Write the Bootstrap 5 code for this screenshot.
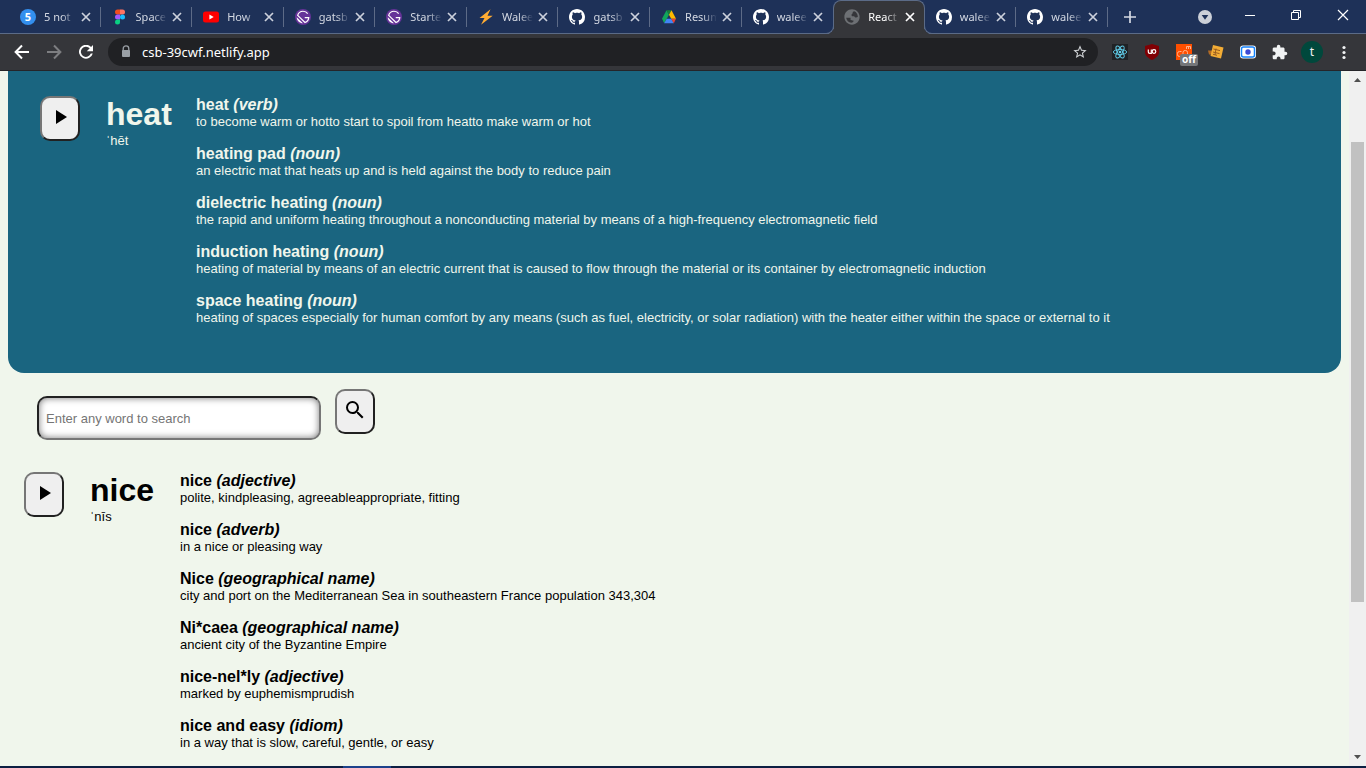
<!DOCTYPE html>
<html lang="en">
<head>
<meta charset="utf-8">
<meta name="viewport" content="width=device-width, initial-scale=1">
<title>React App</title>
<link href="https://cdn.jsdelivr.net/npm/bootstrap@5.3.0/dist/css/bootstrap.min.css" rel="stylesheet">
<style>
  :root { --strip: #1e3158; --edge: #5b6b87; --bar: #35363a; --field: #202124; --page: #f0f6ec; --panel: #1a6580; }
  body { font-family: "Liberation Sans", Arial, sans-serif; font-size: 13px; line-height: 15px; color: #000; background: var(--page); }
  button { color: inherit; }
  svg { display: block; flex: none; }

  .browser-ui { font-family: "Noto Sans", "Open Sans", sans-serif; }
  .tab-strip { background: var(--strip); height: 34px; padding-left: 9px; border-bottom: 1px solid var(--edge); }
  .tab-strip .tabs { flex: 1 1 0; min-width: 0; }
  .tab-item { flex: 1 1 0; min-width: 0; height: 34px; padding: 0 9px 0 11px; position: relative; }
  .tab-item::after { content: ""; position: absolute; right: 0; top: 7px; width: 1px; height: 20px; background: #5d6b87; }
  .tab-item a { color: #d3d8e2; font-size: 11px; line-height: 16px; gap: 8px; }
  .tab-title { overflow: hidden; white-space: nowrap; flex: 1 1 0; min-width: 0; -webkit-mask-image: linear-gradient(90deg, #000 55%, transparent); mask-image: linear-gradient(90deg, #000 55%, transparent); }
  .tab-close { width: 12px; height: 12px; margin-left: 4px; color: #ccd1dc; }
  .tab-item.before-current::after, .tab-item.current::after { display: none; }
  .tab-item.current .tab-face { background: var(--bar); border: 1px solid var(--edge); border-bottom: 0; border-radius: 8px 8px 0 0; position: absolute; inset: 0; }
  .tab-face::before, .tab-face::after { content: ""; position: absolute; bottom: 0; width: 8px; height: 8px; border: 1px solid var(--edge); border-top: 0; }
  .tab-face::before { left: -8px; border-left: 0; border-radius: 0 0 8px 0; box-shadow: 3px 3px 0 var(--bar); clip-path: inset(0 -1px 0 0); }
  .tab-face::after { right: -8px; border-right: 0; border-radius: 0 0 0 8px; box-shadow: -3px 3px 0 var(--bar); clip-path: inset(0 0 0 -1px); }
  .current a, .current .tab-close { color: #fff; position: relative; }
  .window-tools { width: 258px; color: #fff; }
  .window-tools button { height: 33px; }
  .plain { border: 0; background: none; padding: 0; display: flex; align-items: center; justify-content: center; flex: none; }

  .tool-bar { background: var(--bar); height: 37px; padding: 0 6px; border-bottom: 1px solid #252529; color: #f1f3f4; }
  .tool { width: 32px; height: 32px; position: relative; }
  .omnibox { background: var(--field); height: 28px; margin: 0 6px; border-radius: 14px; padding: 0 10px 0 12px; gap: 10px; }
  .omnibox input { background: none; border: 0; outline: 0; padding: 0; color: #fff; font-size: 13px; line-height: 20px; }
  .off-mark { position: absolute; left: 12px; top: 18px; width: 18px; height: 12px; border-radius: 2px; background: #747679; color: #fff; font-weight: 700; font-size: 10px; line-height: 11px; }
  .avatar { width: 22px; height: 22px; background: #00483c; font-size: 12px; line-height: 21px; }

  .viewport-row { min-height: 0; }
  .page-body { min-width: 0; overflow: hidden; padding: 0 8px; }
  .hero-panel { background: var(--panel); color: var(--page); border-radius: 0 0 16px 16px; padding: 25px 32px 32px; }
  .result { padding: 32px 16px 0; }
  .entry { gap: 26px; }
  .word-col { width: 64px; flex: none; }
  .key-btn { width: 40px; height: 45px; border: 2px solid; border-color: #767676 #212121 #212121 #767676; border-radius: 10px; background: #efefef; color: #000; padding: 0 0 3px; display: flex; align-items: center; justify-content: center; flex: none; }
  .headword { font-size: 32px; line-height: 37px; font-weight: 700; margin: 0; }
  .sense { margin: 0 0 16px; }
  .sense h2 { font-size: 16px; line-height: 18px; font-weight: 700; margin: 0; }
  .sense p { margin: 0; }
  .search-form { padding: 16px 29px 0; gap: 14px; }
  .search-form input { width: 284px; height: 44px; margin-top: 7px; border: 2px solid; border-color: #212121 #767676 #767676 #212121; border-radius: 10px; padding: 0 7px; background: #fff; box-shadow: inset 0 0 7px #777; font-size: 13px; outline: 0; }
  .search-form input::placeholder { color: #757575; opacity: 1; }

  .scroll-rail { width: 17px; background: #f0f0f0; flex: none; }
  .scroll-rail .thumb { flex: 460 1 0; background: #c1c1c1; margin: 0 2px; }
  .above { flex: 54 1 0; } .below { flex: 147 1 0; }
  .task-edge { height: 2px; background: #0c1f42; flex: none; }
  .task-edge span { width: 48px; margin-left: 343px; background: #1c428a; }
</style>
</head>
<body class="vh-100 d-flex flex-column overflow-hidden">

<svg class="d-none" aria-hidden="true">
  <symbol id="close" viewBox="0 0 12 12"><path d="M2 2l8 8M10 2l-8 8" stroke="currentColor" stroke-width="1.7"/></symbol>
  <symbol id="github" viewBox="0 0 16 16"><path fill="#fff" d="M8 0C3.58 0 0 3.58 0 8c0 3.54 2.29 6.53 5.47 7.59.4.07.55-.17.55-.38 0-.19-.01-.82-.01-1.49-2.01.37-2.53-.49-2.69-.94-.09-.23-.48-.94-.82-1.13-.28-.15-.68-.52-.01-.53.63-.01 1.08.58 1.23.82.72 1.21 1.87.87 2.33.66.07-.52.28-.87.51-1.07-1.78-.2-3.64-.89-3.64-3.95 0-.87.31-1.59.82-2.15-.08-.2-.36-1.02.08-2.12 0 0 .67-.21 2.2.82.64-.18 1.32-.27 2-.27s1.36.09 2 .27c1.53-1.04 2.2-.82 2.2-.82.44 1.1.16 1.92.08 2.12.51.56.82 1.27.82 2.15 0 3.07-1.87 3.75-3.65 3.95.29.25.54.73.54 1.48 0 1.07-.01 1.93-.01 2.2 0 .21.15.46.55.38A8.01 8.01 0 0 0 16 8c0-4.42-3.58-8-8-8z"/></symbol>
  <symbol id="gatsby" viewBox="0 0 24 24"><circle cx="12" cy="12" r="12" fill="#663399"/><path d="M19 6.900C17.500 4.700 15 3.400 12 3.400 8 3.400 5 6 4 9.600l11 10.700c3.200-1.300 5.400-4 5.600-7.400h-6" fill="none" stroke="#fff" stroke-width="1.800"/><path d="M2.600 12.200l9.300 9.200c-2.400-.1-4.800-.9-6.600-2.700s-2.700-4.200-2.700-6.500z" fill="#fff"/></symbol>
  <symbol id="play" viewBox="0 0 24 24"><path fill="currentColor" d="M8 5v14l11-7z"/></symbol>
</svg>

<header class="browser-ui flex-shrink-0">
  <div class="tab-strip d-flex">
    <nav class="tabs d-flex" aria-label="Open tabs">
      <div class="tab-item d-flex align-items-center"><a class="d-flex align-items-center flex-fill text-decoration-none overflow-hidden" href="#"><svg width="16" height="16" viewBox="0 0 16 16"><circle cx="8" cy="8" r="8" fill="#338fee"/><text x="8" y="12" text-anchor="middle" font-size="11" font-weight="700" fill="#fff">5</text></svg><span class="tab-title">5 not</span></a><button class="plain tab-close" aria-label="Close"><svg width="12" height="12"><use href="#close"/></svg></button></div>
      <div class="tab-item d-flex align-items-center"><a class="d-flex align-items-center flex-fill text-decoration-none overflow-hidden" href="#"><svg width="16" height="16" viewBox="0 0 16 16"><path d="M8 .5H5.500a2.500 2.500 0 0 0 0 5H8z" fill="#f24e1e"/><path d="M8 .5h2.500a2.500 2.500 0 0 1 0 5H8z" fill="#ff7262"/><path d="M8 5.500H5.500a2.500 2.500 0 0 0 0 5H8z" fill="#a259ff"/><circle cx="10.500" cy="8" r="2.500" fill="#1abcfe"/><path d="M8 10.500H5.500A2.500 2.500 0 1 0 8 13z" fill="#0acf83"/></svg><span class="tab-title">Space</span></a><button class="plain tab-close" aria-label="Close"><svg width="12" height="12"><use href="#close"/></svg></button></div>
      <div class="tab-item d-flex align-items-center"><a class="d-flex align-items-center flex-fill text-decoration-none overflow-hidden" href="#"><svg width="16" height="16" viewBox="0 0 16 16"><rect y="2.500" width="16" height="11" rx="2.500" fill="#f00"/><path d="M6.400 5.500v5L10.700 8z" fill="#fff"/></svg><span class="tab-title">How</span></a><button class="plain tab-close" aria-label="Close"><svg width="12" height="12"><use href="#close"/></svg></button></div>
      <div class="tab-item d-flex align-items-center"><a class="d-flex align-items-center flex-fill text-decoration-none overflow-hidden" href="#"><svg width="16" height="16"><use href="#gatsby"/></svg><span class="tab-title">gatsb</span></a><button class="plain tab-close" aria-label="Close"><svg width="12" height="12"><use href="#close"/></svg></button></div>
      <div class="tab-item d-flex align-items-center"><a class="d-flex align-items-center flex-fill text-decoration-none overflow-hidden" href="#"><svg width="16" height="16"><use href="#gatsby"/></svg><span class="tab-title">Starte</span></a><button class="plain tab-close" aria-label="Close"><svg width="12" height="12"><use href="#close"/></svg></button></div>
      <div class="tab-item d-flex align-items-center"><a class="d-flex align-items-center flex-fill text-decoration-none overflow-hidden" href="#"><svg width="16" height="16" viewBox="0 0 16 16"><path d="M12.500.3L1.500 9h5L3 15.700 14.700 6.800H9.500z" fill="#ffac33"/></svg><span class="tab-title">Walee</span></a><button class="plain tab-close" aria-label="Close"><svg width="12" height="12"><use href="#close"/></svg></button></div>
      <div class="tab-item d-flex align-items-center"><a class="d-flex align-items-center flex-fill text-decoration-none overflow-hidden" href="#"><svg width="16" height="16"><use href="#github"/></svg><span class="tab-title">gatsb</span></a><button class="plain tab-close" aria-label="Close"><svg width="12" height="12"><use href="#close"/></svg></button></div>
      <div class="tab-item d-flex align-items-center"><a class="d-flex align-items-center flex-fill text-decoration-none overflow-hidden" href="#"><svg width="16" height="16" viewBox="0 0 16 16"><path d="M5.500 1.300L1 9.800l2.200 4.400L8 5.800z" fill="#11a55c"/><path d="M5.500 1.300h5L8 5.800z" fill="#188038"/><path d="M10.500 1.300L15 9.800h-4.800L8 5.800z" fill="#ffba00"/><path d="M3.200 14.200l2.500-4.400h4.600l2.500 4.400z" fill="#4285f4"/><path d="M10.200 9.800H15l-2.200 4.400z" fill="#ea4335"/></svg><span class="tab-title">Resum</span></a><button class="plain tab-close" aria-label="Close"><svg width="12" height="12"><use href="#close"/></svg></button></div>
      <div class="tab-item before-current d-flex align-items-center"><a class="d-flex align-items-center flex-fill text-decoration-none overflow-hidden" href="#"><svg width="16" height="16"><use href="#github"/></svg><span class="tab-title">walee</span></a><button class="plain tab-close" aria-label="Close"><svg width="12" height="12"><use href="#close"/></svg></button></div>
      <div class="tab-item current d-flex align-items-center"><div class="tab-face"></div><a class="d-flex align-items-center flex-fill text-decoration-none overflow-hidden" href="#" aria-current="page"><svg width="16" height="16" viewBox="1 1 22 22"><path fill="#6d7074" d="M12 1.500C6.200 1.500 1.500 6.200 1.500 12S6.200 22.500 12 22.500 22.500 17.800 22.500 12 17.800 1.500 12 1.500zM11 20c-3.500-.4-6.600-3.400-7-7h6v3c1 .3 2 .8 4 .8V18c0 1-1.500 2-3 2zm9-8c-2 1-4 1-5-1h-3c-1-1-1-3 1-4V5c1-.5 1.500-.8 2-.8 3 1.200 5 4 5 7.800z"/></svg><span class="tab-title">React</span></a><button class="plain tab-close" aria-label="Close"><svg width="12" height="12"><use href="#close"/></svg></button></div>
      <div class="tab-item d-flex align-items-center"><a class="d-flex align-items-center flex-fill text-decoration-none overflow-hidden" href="#"><svg width="16" height="16"><use href="#github"/></svg><span class="tab-title">walee</span></a><button class="plain tab-close" aria-label="Close"><svg width="12" height="12"><use href="#close"/></svg></button></div>
      <div class="tab-item d-flex align-items-center"><a class="d-flex align-items-center flex-fill text-decoration-none overflow-hidden" href="#"><svg width="16" height="16"><use href="#github"/></svg><span class="tab-title">walee</span></a><button class="plain tab-close" aria-label="Close"><svg width="12" height="12"><use href="#close"/></svg></button></div>
    </nav>
    <div class="window-tools d-flex flex-shrink-0">
      <button class="plain px-3" aria-label="New tab"><svg width="12" height="12" viewBox="0 0 12 12"><path d="M6 0v12M0 6h12" stroke="#d5d9e2" stroke-width="1.700"/></svg></button>
      <button class="plain ms-auto px-3" aria-label="Search tabs"><svg width="14" height="14" viewBox="0 0 14 14"><circle cx="7" cy="7" r="7" fill="#ccd0d8"/><path d="M3.700 5h6.600L7 9.800z" fill="#1e3158"/></svg></button>
      <button class="plain px-3 pb-1" aria-label="Minimize"><svg width="12" height="12" viewBox="0 0 12 12"><path d="M1 6.500h10" stroke="#fff"/></svg></button>
      <button class="plain px-3 pb-1" aria-label="Restore"><svg width="16" height="12" viewBox="0 0 16 12"><path d="M3.500 3.500h7v7h-7zM5.500 3V1.500h7v7H11" fill="none" stroke="#fff"/></svg></button>
      <button class="plain px-3 pb-1" aria-label="Close window"><svg width="14" height="12" viewBox="0 0 14 12"><path d="M2 1l10 10M12 1L2 11" stroke="#fff" stroke-width="1.200"/></svg></button>
    </div>
  </div>

  <div class="tool-bar d-flex align-items-center">
    <button class="plain tool" aria-label="Back"><svg width="16" height="16" viewBox="0 0 16 16"><path d="M15 8H2M8 1.500L1.600 8 8 14.500" fill="none" stroke="#fff" stroke-width="2"/></svg></button>
    <button class="plain tool" aria-label="Forward"><svg width="16" height="16" viewBox="0 0 16 16"><path d="M1 8h13M8 1.500L14.400 8 8 14.500" fill="none" stroke="#7d7e81" stroke-width="2"/></svg></button>
    <button class="plain tool" aria-label="Reload"><svg width="14" height="14" viewBox="3 3 18 18"><path fill="#fff" d="M18.500 5.500A9 9 0 1 0 20.700 14h-2.500a6.600 6.600 0 1 1-1.400-6.800L13 11h8V3z"/></svg></button>
    <div class="omnibox d-flex align-items-center flex-fill">
      <svg width="12" height="14" viewBox="0 0 12 14"><path d="M3.200 6V3.700a2.800 2.800 0 0 1 5.600 0V6" fill="none" stroke="#9aa0a6" stroke-width="1.300"/><rect x="2" y="5" width="8" height="7" rx="1" fill="#9aa0a6"/></svg>
      <input class="flex-fill" type="text" aria-label="Address" value="csb-39cwf.netlify.app">
      <button class="plain" aria-label="Bookmark"><svg width="16" height="16" viewBox="0 0 24 24"><path fill="#d0d3d6" d="M22 9.240l-7.190-.62L12 2 9.190 8.630 2 9.240l5.460 4.730L5.820 21 12 17.270 18.180 21l-1.630-7.030L22 9.240zM12 15.400l-3.760 2.270 1-4.280-3.320-2.880 4.380-.38L12 6.100l1.710 4.040 4.380.38-3.320 2.880 1 4.280L12 15.400z"/></svg></button>
    </div>
    <button class="plain tool" aria-label="React tools"><svg width="16" height="16" viewBox="0 0 16 16"><rect width="16" height="16" fill="#202225"/><g fill="none" stroke="#61cfec" stroke-width=".9"><ellipse cx="8" cy="8" rx="6.700" ry="2.500"/><ellipse cx="8" cy="8" rx="6.700" ry="2.500" transform="rotate(60 8 8)"/><ellipse cx="8" cy="8" rx="6.700" ry="2.500" transform="rotate(120 8 8)"/></g><circle cx="8" cy="8" r="1.300" fill="#61cfec"/></svg></button>
    <button class="plain tool" aria-label="Content blocker"><svg width="16" height="16" viewBox="0 0 16 16"><path d="M8 0l7 2v6c0 4-4 6.500-7 8-3-1.500-7-4-7-8V2z" fill="#800004"/><path d="M4.300 5.500v2.500q0 1.300 1.500 1.300h1.500V5.500" fill="none" stroke="#fff" stroke-width="1.200"/><circle cx="10" cy="7.500" r="1.800" fill="none" stroke="#fff" stroke-width="1.200"/></svg></button>
    <button class="plain tool" aria-label="Color tool, off"><svg width="16" height="16" viewBox="0 0 16 16"><rect width="16" height="16" fill="#ff4f00"/><g fill="none" stroke="#ffb28d"><path d="M5.500 7.500h-2a2 2 0 0 0-2 2v1a2 2 0 0 0 2 2h2"/><rect x="7" y="6.500" width="4.500" height="6" rx="2"/><path d="M10.500 5V2.500h4V5M12.500 2.500V5"/></g></svg><span class="off-mark">off</span></button>
    <button class="plain tool" aria-label="Notes"><svg width="16" height="16" viewBox="0 0 16 16"><path d="M0 6.500h4v4H1z" fill="#b36b24"/><path d="M5 1l10.500 2.500L13 14.500 2.500 12z" fill="#f3ad35"/><path d="M5.500 5l6.500 1.600M5 8l6.500 1.600M5 10.300l4 1M8 4.500L7 11" stroke="#985d20" fill="none"/></svg></button>
    <button class="plain tool" aria-label="Screen recorder"><svg width="16" height="16" viewBox="0 0 16 16"><rect y="1.500" width="16" height="13" rx="3" fill="#fff"/><rect x="1.500" y="3" width="13" height="10" rx="2" fill="none" stroke="#1683fb" stroke-width="1.500"/><circle cx="8" cy="8" r="2.700" fill="#3c49d4"/></svg></button>
    <button class="plain tool" aria-label="Extensions"><svg width="16" height="16" viewBox="1 0 23 23"><path fill="#f1f3f4" d="M20.500 11H19V7c0-1.100-.9-2-2-2h-4V3.500C13 2.120 11.880 1 10.500 1S8 2.120 8 3.500V5H4c-1.100 0-1.990.9-1.990 2v3.800H3.500c1.490 0 2.700 1.210 2.700 2.700s-1.210 2.700-2.700 2.700H2V20c0 1.100.9 2 2 2h3.800v-1.500c0-1.490 1.210-2.700 2.700-2.700s2.700 1.210 2.700 2.700V22H17c1.100 0 2-.9 2-2v-4h1.500a2.500 2.500 0 0 0 0-5z"/></svg></button>
    <button class="plain tool" aria-label="Profile"><span class="avatar rounded-circle">t</span></button>
    <button class="plain tool" aria-label="Menu"><svg width="4" height="16" viewBox="0 0 4 16"><g fill="#f1f3f4"><circle cx="2" cy="3.500" r="1.600"/><circle cx="2" cy="8.500" r="1.600"/><circle cx="2" cy="13.500" r="1.600"/></g></svg></button>
  </div>
</header>

<div class="viewport-row d-flex flex-fill">
  <main class="page-body flex-fill">
    <section class="hero-panel">
      <div class="entry d-flex">
        <button class="key-btn" aria-label="Play pronunciation of heat"><svg width="24" height="24"><use href="#play"/></svg></button>
        <div class="word-col"><h1 class="headword">heat</h1><span>ˈhēt</span></div>
        <div>
          <div class="sense"><h2>heat <em>(verb)</em></h2><p>to become warm or hotto start to spoil from heatto make warm or hot</p></div>
          <div class="sense"><h2>heating pad <em>(noun)</em></h2><p>an electric mat that heats up and is held against the body to reduce pain</p></div>
          <div class="sense"><h2>dielectric heating <em>(noun)</em></h2><p>the rapid and uniform heating throughout a nonconducting material by means of a high-frequency electromagnetic field</p></div>
          <div class="sense"><h2>induction heating <em>(noun)</em></h2><p>heating of material by means of an electric current that is caused to flow through the material or its container by electromagnetic induction</p></div>
          <div class="sense"><h2>space heating <em>(noun)</em></h2><p>heating of spaces especially for human comfort by any means (such as fuel, electricity, or solar radiation) with the heater either within the space or external to it</p></div>
        </div>
      </div>
    </section>

    <form class="search-form d-flex align-items-start">
      <input type="text" placeholder="Enter any word to search" aria-label="Word to search">
      <button class="key-btn" type="button" aria-label="Search"><svg width="24" height="24" viewBox="0 0 24 24"><path fill="currentColor" d="M15.500 14h-.79l-.28-.27A6.471 6.471 0 0 0 16 9.500 6.500 6.500 0 1 0 9.500 16c1.610 0 3.090-.59 4.230-1.570l.27.28v.79l5 4.990L20.490 19l-4.990-5zm-6 0C7.010 14 5 11.990 5 9.500S7.010 5 9.500 5 14 7.010 14 9.500 11.990 14 9.500 14z"/></svg></button>
    </form>

    <section class="result">
      <div class="entry d-flex">
        <button class="key-btn" aria-label="Play pronunciation of nice"><svg width="24" height="24"><use href="#play"/></svg></button>
        <div class="word-col"><h1 class="headword">nice</h1><span>ˈnīs</span></div>
        <div>
          <div class="sense"><h2>nice <em>(adjective)</em></h2><p>polite, kindpleasing, agreeableappropriate, fitting</p></div>
          <div class="sense"><h2>nice <em>(adverb)</em></h2><p>in a nice or pleasing way</p></div>
          <div class="sense"><h2>Nice <em>(geographical name)</em></h2><p>city and port on the Mediterranean Sea in southeastern France population 343,304</p></div>
          <div class="sense"><h2>Ni*caea <em>(geographical name)</em></h2><p>ancient city of the Byzantine Empire</p></div>
          <div class="sense"><h2>nice-nel*ly <em>(adjective)</em></h2><p>marked by euphemismprudish</p></div>
          <div class="sense"><h2>nice and easy <em>(idiom)</em></h2><p>in a way that is slow, careful, gentle, or easy</p></div>
        </div>
      </div>
    </section>
  </main>

  <div class="scroll-rail d-flex flex-column" aria-hidden="true">
    <svg width="17" height="17" viewBox="0 0 17 17"><path d="M5 11h7L8.500 7z" fill="#505050"/></svg>
    <div class="above"></div><div class="thumb"></div><div class="below"></div>
    <svg width="17" height="17" viewBox="0 0 17 17"><path d="M5 6h7l-3.500 4z" fill="#505050"/></svg>
  </div>
</div>
<div class="task-edge d-flex"><span></span></div>

<script src="https://cdn.jsdelivr.net/npm/bootstrap@5.3.0/dist/js/bootstrap.bundle.min.js"></script>
</body>
</html>
